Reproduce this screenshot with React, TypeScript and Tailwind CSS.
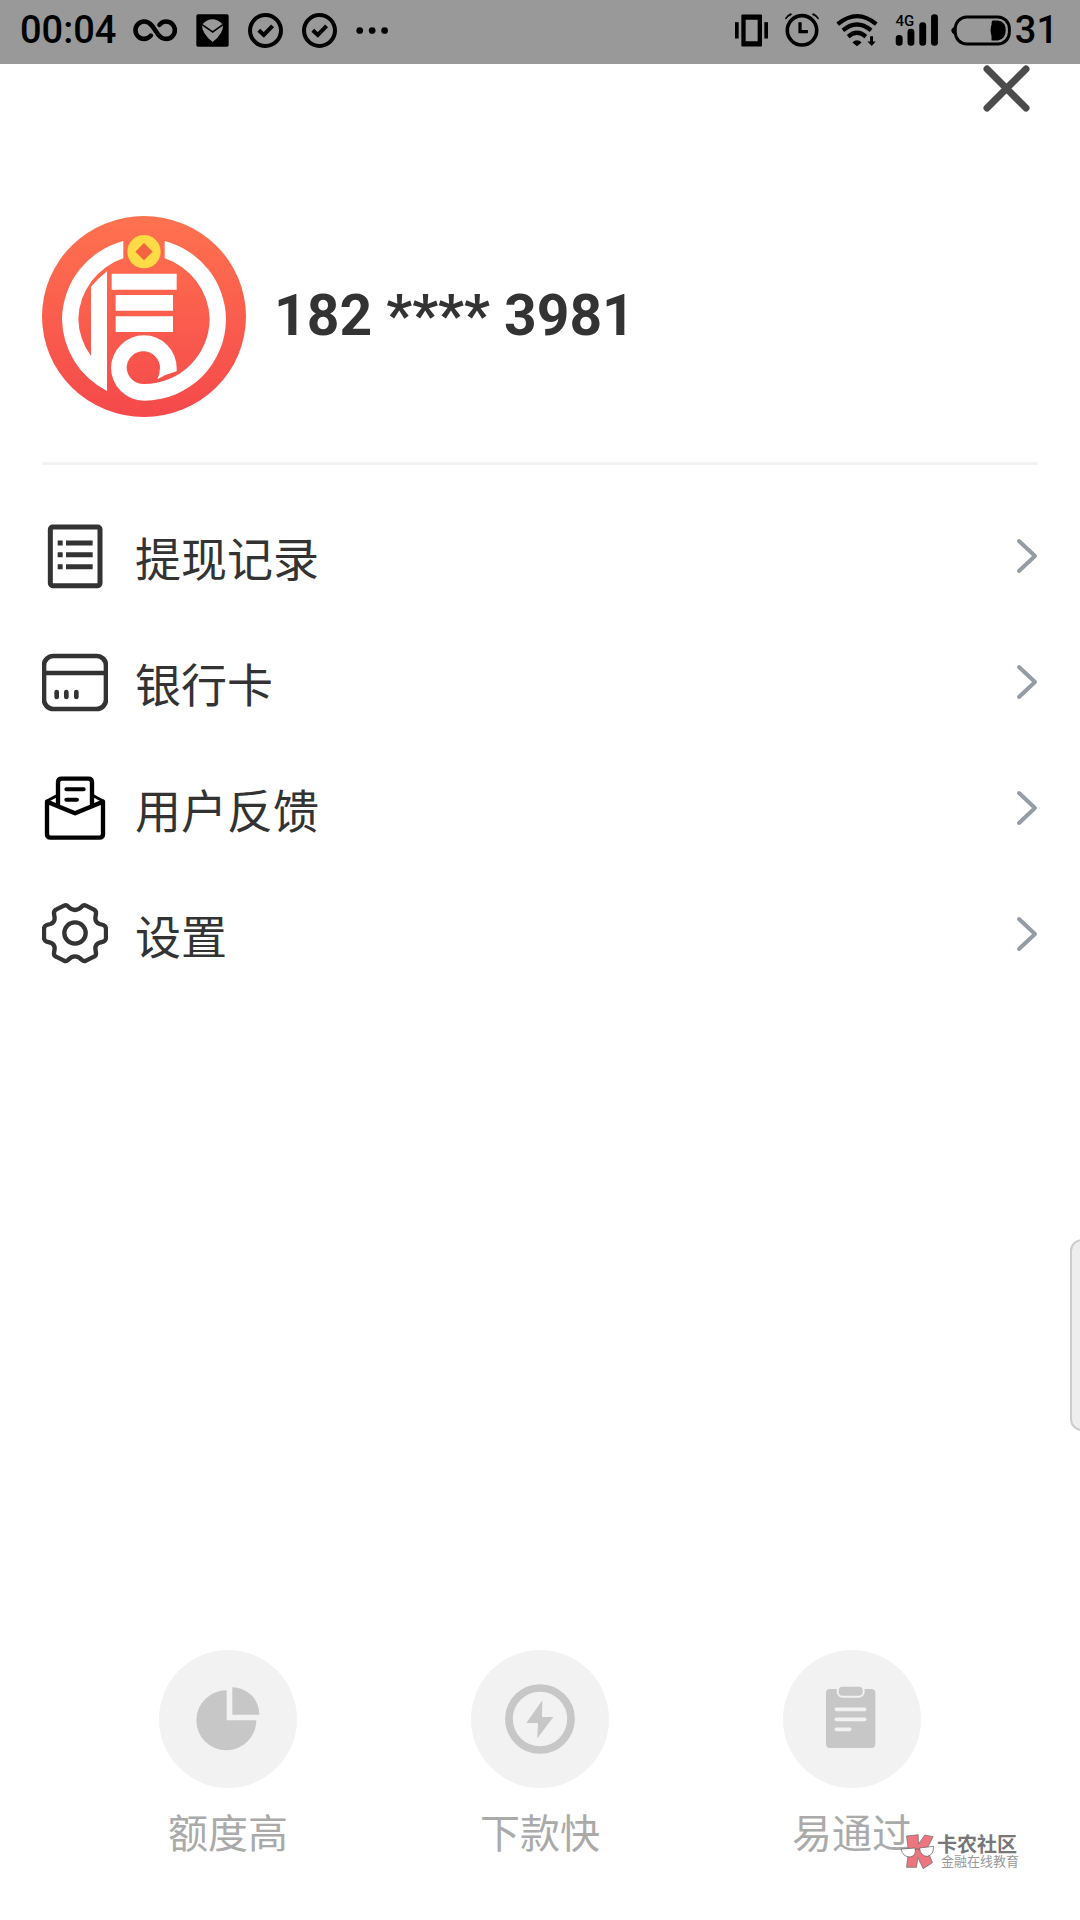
import React from "react";

type IconProps = { className?: string };

const InfinityIcon = () => (
  <svg viewBox="402 56 134 72" className="h-6 w-11" fill="none" stroke="#000" strokeWidth="14" strokeLinecap="round">
    <path d="M456 109Q448 119 436 119A26.500 26.500 0 0 1 436 66Q449 66 460 79L478 105Q488 119 503 119A26.500 26.500 0 0 0 503 66Q490 66 483 76" />
  </svg>
);

const ShieldIcon = () => (
  <svg viewBox="594 40 99 99" className="size-[33px]">
    <rect x="595" y="41" width="97" height="97" rx="5" />
    <path d="M612 72Q643 40 675 72Q677 98 644 124Q611 98 612 72Z" fill="#999" />
    <path d="M612 72L644 94L675 72" fill="none" stroke="#000" strokeWidth="5" />
  </svg>
);

const CheckIcon = () => (
  <svg viewBox="750 38 104 104" className="size-[35px]" fill="none" stroke="#000" strokeWidth="12">
    <circle cx="802" cy="90" r="46" />
    <path d="M782 89L797 103L823 76" />
  </svg>
);

const DotsIcon = () => (
  <svg viewBox="1078 80 98 20" className="h-[7px] w-[33px]">
    <circle cx="1089" cy="90" r="10" />
    <circle cx="1126" cy="90" r="10" />
    <circle cx="1163" cy="90" r="10" />
  </svg>
);

const VibrateIcon = () => (
  <svg viewBox="72 41 99 98" className="size-[33px]">
    <path fillRule="evenodd" d="M94 42H150Q153 42 153 45V135Q153 138 150 138H94Q91 138 91 135V45Q91 42 94 42ZM104 58V122H140V58Z" />
    <rect x="72" y="65" width="11" height="49" />
    <rect x="160" y="65" width="11" height="49" />
  </svg>
);

const AlarmIcon = () => (
  <svg viewBox="224 38 104 104" className="size-[34px]" fill="none" stroke="#000">
    <circle cx="276" cy="91" r="45" strokeWidth="11" />
    <path d="M270 66V95H294" strokeWidth="10" />
    <path d="M224 55Q229 44 242 39L245 43Q234 47 227 57ZM328 55Q323 44 310 39L307 43Q318 47 325 57Z" fill="#000" strokeWidth="1" />
  </svg>
);

const WifiIcon = () => (
  <svg viewBox="378 37 126 104" className="h-[34px] w-[42px]" fill="none" stroke="#000" strokeWidth="13">
    <path d="M382 71Q441 22 500 71" />
    <path d="M398 90Q441 54 484 90" />
    <path d="M414 109Q441 86 468 109" />
    <path d="M427 127Q441 114 455 127L441 139Z" fill="#000" stroke="none" />
    <path d="M481 108H490V124H498L486 138L473 124H481Z" fill="#000" stroke="none" />
  </svg>
);

const SignalIcon = () => (
  <svg viewBox="554 38 132 104" className="h-[34px] w-[44px]">
    <text x="554" y="77" fontFamily="Roboto, sans-serif" fontWeight="500" fontSize="46">4G</text>
    <rect x="555" y="105" width="21" height="33" rx="10" />
    <rect x="591" y="86" width="21" height="52" rx="10" />
    <rect x="627" y="66" width="21" height="72" rx="10" />
    <rect x="663" y="42" width="21" height="96" rx="10" />
  </svg>
);

const BatteryIcon = () => (
  <svg viewBox="720 43 182 94" className="h-[31px] w-[60px]">
    <rect x="733" y="49" width="164" height="82" rx="35" fill="none" stroke="#000" strokeWidth="9" />
    <path d="M733 77Q721 82 721 90T733 103Z" />
    <path d="M847 60H863Q886 64 886 90T863 120H843V107Q837 90 843 72Q843 60 847 60Z" />
  </svg>
);

const CloseIcon = () => (
  <svg viewBox="0 0 48 48" className="size-12" stroke="#4b4b4b" strokeWidth="7" strokeLinecap="round">
    <path d="M4 5L43 44M43 5L4 44" />
  </svg>
);

const Emblem = ({ className }: IconProps) => (
  <svg viewBox="36 47 612 603" className={className} role="img" aria-label="头像">
    <defs>
      <linearGradient id="emblem" x1="0" y1="0" x2="0" y2="1">
        <stop offset="0" stopColor="#ff724f" />
        <stop offset="1" stopColor="#f5494b" />
      </linearGradient>
    </defs>
    <ellipse cx="342" cy="348.500" rx="306" ry="301.500" fill="url(#emblem)" />
    <g fill="#fff">
      <path d="M280 122A246 246 0 0 0 96 355A246 246 0 0 0 231 572V213Q203 236 183 259V467A197 197 0 0 1 145 355A197 197 0 0 1 280 174Z" />
      <path d="M404 122A246 246 0 0 1 588 355A246 246 0 0 1 342 601A99 99 0 0 1 243 503A99 99 0 0 1 342 405A98 98 0 0 1 440 503V513Q409 521 382 537Q390 520 390 503A50 50 0 0 0 290 503A50 50 0 0 0 342 551A197 197 0 0 0 539 355A197 197 0 0 0 404 174Z" />
      <path d="M245 220H440V268H245ZM257 284H429V331H257ZM257 348H429V395H257Z" />
    </g>
    <circle cx="342" cy="154" r="50" fill="#ffdc45" />
    <path d="M342 128L368 154L342 180L316 154Z" fill="#f4633f" />
  </svg>
);

const RecordIcon = () => (
  <svg viewBox="36 69 198 198" className="size-[66px]" fill="none" stroke="#333">
    <rect x="61" y="81" width="149" height="176" rx="7" strokeWidth="15" />
    <path d="M83 129H98M108 129H188M83 164H98M108 164H188M83 200H98M108 200H188" strokeWidth="15" />
  </svg>
);

const CardIcon = () => (
  <svg viewBox="36 447 198 198" className="size-[66px]" fill="none" stroke="#333">
    <rect x="42" y="468" width="186" height="159" rx="28" strokeWidth="14" />
    <path d="M42 519H228" strokeWidth="14" />
    <path d="M80 576V591M109 576V591M139 576V591" strokeWidth="14" strokeLinecap="round" />
  </svg>
);

const FeedbackIcon = () => (
  <svg viewBox="36 46 198 198" className="size-[66px]" fill="none" stroke="#000" strokeWidth="13" strokeLinejoin="round" strokeLinecap="round">
    <path d="M51 126L135 161L219 126V223Q219 234 208 234H62Q51 234 51 223Z" />
    <path d="M84 138V68Q84 57 95 57H175Q186 57 186 68V138" />
    <path d="M84 106L51 124L84 139M186 106L219 124L186 139" strokeWidth="9" />
    <path d="M109 89H161M109 120H141" strokeWidth="12" />
  </svg>
);

const GearIcon = () => (
  <svg viewBox="36 423 198 198" className="size-[66px]" fill="none" stroke="#333" strokeWidth="13" strokeLinejoin="round">
    <path d="M135 450Q146 450 156 439Q161 434 168 437L192 449Q199 453 198 461L196 474Q196 488 209 492L220 495Q228 498 228 507V533Q228 542 220 545L209 548Q196 552 196 566L198 579Q199 587 192 590L168 602Q161 605 156 600Q146 589 135 589T114 600Q109 605 102 602L78 590Q71 587 72 579L74 566Q74 552 61 548L50 545Q42 542 42 533V507Q42 498 50 495L61 492Q74 488 74 474L72 461Q71 453 78 449L102 437Q109 434 114 439Q124 450 135 450Z" />
    <circle cx="135" cy="519" r="32" />
  </svg>
);

const Chevron = () => (
  <svg viewBox="0 0 22 36" className="h-9 w-[22px]" fill="none" stroke="#969ca5" strokeWidth="4" strokeLinecap="round" strokeLinejoin="round">
    <path d="M3 3L19 18L3 33" />
  </svg>
);

const PieIcon = () => (
  <svg viewBox="57 60 414 414" className="size-full" fill="#c7c7c7">
    <path d="M260 181V271H349A90 90 0 1 1 260 181Z" />
    <path d="M277 172A81 81 0 0 1 358 254H277Z" />
  </svg>
);

const BoltIcon = () => (
  <svg viewBox="63 60 414 414" className="size-full">
    <circle cx="270" cy="267" r="93" fill="none" stroke="#c7c7c7" strokeWidth="23" />
    <path d="M277 211L229 279H264L262 325L310 261H276Z" fill="#c7c7c7" />
  </svg>
);

const ClipboardIcon = () => (
  <svg viewBox="39 60 414 414" className="size-full">
    <rect x="168" y="177" width="148" height="177" rx="12" fill="#c7c7c7" />
    <rect x="203" y="167" width="78" height="33" rx="15" fill="#c7c7c7" stroke="#f2f2f2" strokeWidth="6" />
    <path d="M199 238H284M199 268H284M199 298H239" stroke="#f2f2f2" strokeWidth="11" strokeLinecap="round" />
  </svg>
);

const CommunityLogo = () => (
  <svg viewBox="30 68 104 108" className="h-9 w-[35px]" strokeLinejoin="round">
    <path d="M49 74L84 70L85 98L104 71L129 76L110 113L127 154L99 172L83 138L79 168L49 168L55 120Z" fill="#ec7680" stroke="#666" strokeWidth="2" />
    <g fill="#fff" stroke="#555" strokeWidth="2">
      <path d="M33 113L75 110Q79 134 60 137Q37 137 33 113Z" />
      <path d="M88 110L130 105Q131 130 112 135Q91 135 88 110Z" />
      <path d="M75 115Q81 111 88 114" fill="none" />
    </g>
  </svg>
);

const menu = [
  { label: "提现记录", Icon: RecordIcon },
  { label: "银行卡", Icon: CardIcon },
  { label: "用户反馈", Icon: FeedbackIcon },
  { label: "设置", Icon: GearIcon },
];

const features = [
  { label: "额度高", Icon: PieIcon },
  { label: "下款快", Icon: BoltIcon },
  { label: "易通过", Icon: ClipboardIcon },
];

export default function App() {
  return (
    <div className="relative flex min-h-screen flex-col overflow-hidden bg-white font-['Roboto','Noto_Sans_CJK_SC',sans-serif] text-[#333]">
      <header className="flex h-16 items-center justify-between bg-[#999] pr-[22px] pb-1 pl-5 text-[38px] leading-[60px] font-medium text-black">
        <div className="flex items-center gap-[17px]">
          <time>00:04</time>
          <div className="flex items-center gap-[19px]">
            <InfinityIcon />
            <ShieldIcon />
            <CheckIcon />
            <CheckIcon />
            <DotsIcon />
          </div>
        </div>
        <div className="flex items-center gap-1">
          <div className="flex items-center gap-[17px]">
            <VibrateIcon />
            <AlarmIcon />
            <WifiIcon />
            <div className="flex items-center gap-3">
              <SignalIcon />
              <BatteryIcon />
            </div>
          </div>
          <span>31</span>
        </div>
      </header>

      <button type="button" aria-label="关闭" className="mr-[49px] self-end">
        <CloseIcon />
      </button>

      <main className="flex flex-1 flex-col px-[42px] pt-[104px]">
        <section className="flex items-center gap-7 border-b-3 border-[#f3f3f3] pb-[45px]">
          <Emblem className="h-[201px] w-[204px]" />
          <h1 className="pb-0.5 text-[57px] leading-[68px] font-bold">182 **** 3981</h1>
        </section>

        <nav className="flex flex-col pt-7">
          {menu.map(({ label, Icon }) => (
            <button key={label} type="button" className="flex h-[126px] items-center text-left">
              <Icon />
              <span className="ml-[27px] flex-1 pt-2 text-[46px] leading-[68px]">{label}</span>
              <Chevron />
            </button>
          ))}
        </nav>
      </main>

      <footer className="grid grid-cols-3 px-[72px] pb-[61px]">
        {features.map(({ label, Icon }) => (
          <div key={label} className="flex flex-col items-center gap-[23px]">
            <div className="size-[138px] rounded-full bg-[#f2f2f2]">
              <Icon />
            </div>
            <span className="text-[40px] leading-[48px] text-[#aaa]">{label}</span>
          </div>
        ))}
      </footer>

      <div className="absolute top-[1239px] -right-4 h-[192px] w-[26px] rounded-xl border-2 border-[#ccc] bg-[#eee]" />

      <div className="absolute right-[61px] bottom-[50px] flex items-center gap-0.5 whitespace-nowrap text-[#777]">
        <CommunityLogo />
        <div className="flex flex-col">
          <span className="text-[20px] leading-5 font-bold">卡农社区</span>
          <span className="pl-1 text-[13px] leading-[14px] text-[#999]">金融在线教育</span>
        </div>
      </div>
    </div>
  );
}
